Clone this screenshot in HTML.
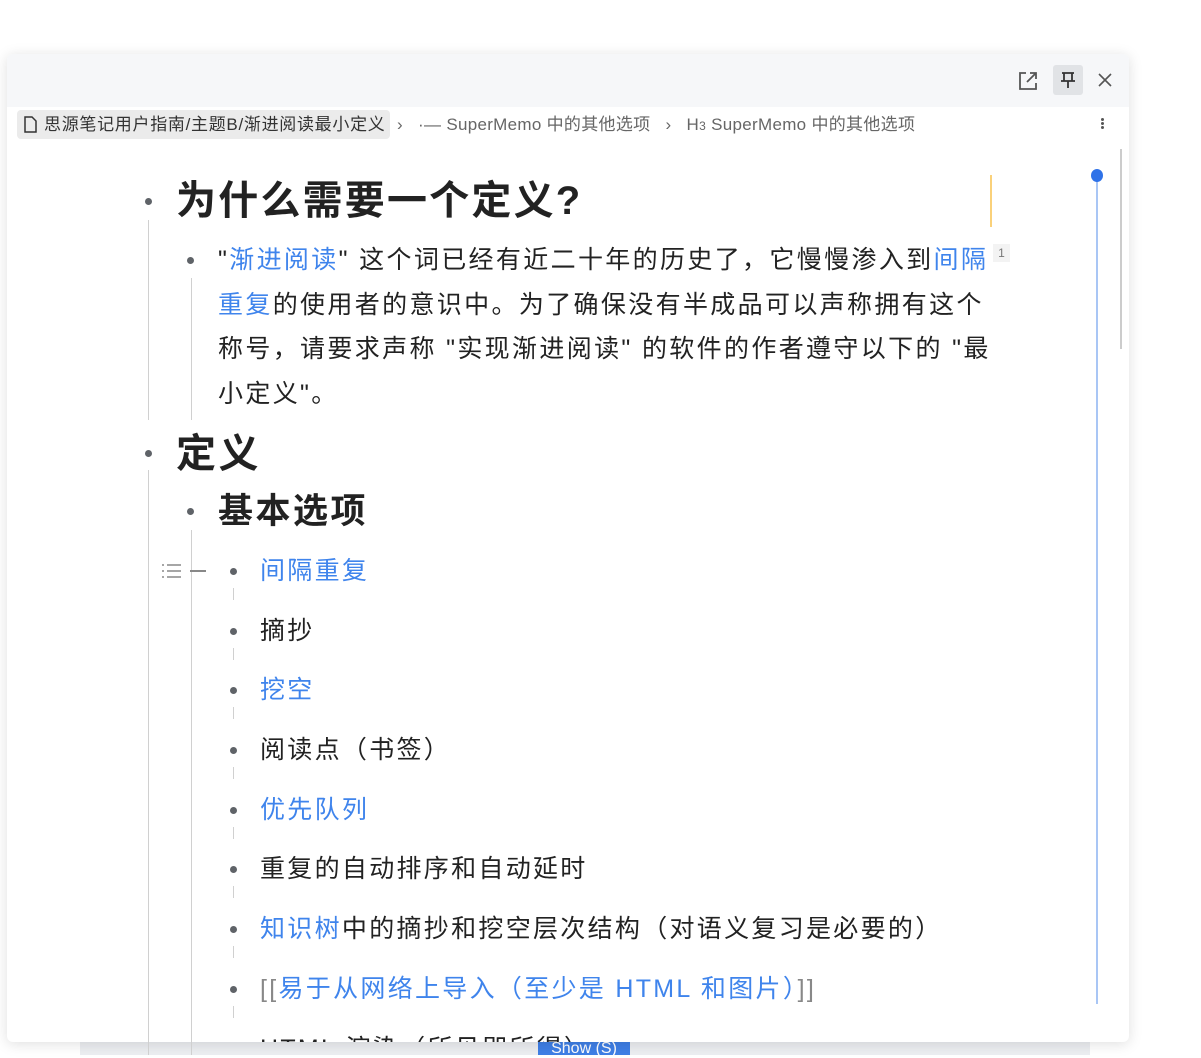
<!DOCTYPE html>
<html><head><meta charset="utf-8"><style>
*{margin:0;padding:0;box-sizing:border-box}
body{width:1201px;height:1055px;overflow:hidden;background:#fff;position:relative;font-family:"Liberation Sans","Noto Sans CJK SC",sans-serif;color:#222}
.a{position:absolute;white-space:nowrap}
.panel{position:absolute;left:7px;top:54px;width:1122px;height:988px;background:#fff;border-radius:6px;box-shadow:0 2px 14px rgba(0,0,0,.13);overflow:hidden}
.hdr{position:absolute;left:0;top:0;width:100%;height:53px;background:#f6f7f9}
.dot{position:absolute;width:7px;height:7px;border-radius:50%;background:#5f6368}
.vl{position:absolute;width:1px;background:#d0d0d0}
.blue{color:#3f84ec}
.t{font-size:25px;line-height:45px;letter-spacing:2.3px}
.p{letter-spacing:2.35px}
</style></head><body>
<div class="a" style="left:80px;top:1040px;width:1010px;height:15px;background:#eceef1"></div>
<div class="a" style="left:538px;top:1040px;width:92px;height:15px;background:#3f7fe6;color:#fff;font-size:16px;line-height:18px;text-align:center">Show (S)</div>
<div class="panel">
<div class="hdr"></div>
<svg class="a" style="left:1010px;top:16px" width="22" height="22" viewBox="0 0 22 22" fill="none" stroke="#555" stroke-width="1.8"><path d="M9 3H3v16h16v-6"/><path d="M13 3h6v6M19 3l-9 9"/></svg>
<div class="a" style="left:1046px;top:11px;width:30px;height:30px;background:#e1e3e6;border-radius:3px"></div>
<svg class="a" style="left:1051px;top:16px" width="20" height="20" viewBox="0 0 20 20" fill="none" stroke="#333" stroke-width="1.8"><path d="M4 3h12M6 3v8h8V3M3 11h14M10 11v7"/></svg>
<svg class="a" style="left:1091px;top:19px" width="14" height="14" viewBox="0 0 14 14" stroke="#555" stroke-width="1.6"><path d="M1 1l12 12M13 1L1 13"/></svg>
<div class="a" style="left:10px;top:56px;width:373px;height:29px;background:#ebebeb;border-radius:4px"></div>
<svg class="a" style="left:16px;top:62px" width="15" height="17" viewBox="0 0 15 17" fill="none" stroke="#333" stroke-width="1.5"><path d="M2 1h7l4 4v11H2z"/></svg>
<div class="a" style="left:37px;top:58px;font-size:17px;line-height:26px;color:#333;letter-spacing:0.7px">思源笔记用户指南/主题B/渐进阅读最小定义</div>
<div class="a" style="left:390px;top:58px;font-size:17px;line-height:26px;color:#666;letter-spacing:0.3px">›&nbsp;&nbsp;&nbsp;·— SuperMemo 中的其他选项&nbsp;&nbsp;&nbsp;›&nbsp;&nbsp;&nbsp;H<span style="font-size:12px">3</span> SuperMemo 中的其他选项</div>
<div class="a" style="left:1094px;top:64px;width:3px;height:3px;background:#555;border-radius:50%;box-shadow:0 4px 0 #555,0 8px 0 #555"></div>
<div class="a" style="left:1113px;top:95px;width:2px;height:200px;background:#ccc"></div>
<div class="a" style="left:1089px;top:120px;width:2px;height:830px;background:#a9c6f5"></div>
<div class="a" style="left:1084px;top:115px;width:12px;height:13px;border-radius:50%;background:#2f72e8"></div>
<div class="a" style="left:983px;top:121px;width:2px;height:52px;background:#fad17a"></div>
</div>
<div class="dot" style="left:145px;top:198px"></div>
<div class="a" style="left:176px;top:174px;font-size:40px;font-weight:bold;line-height:54px;letter-spacing:2.2px">为什么需要一个定义?</div>
<div class="vl" style="left:148px;top:220px;height:200px"></div>
<div class="dot" style="left:187px;top:257px"></div>
<div class="vl" style="left:191px;top:278px;height:142px"></div>
<div class="a t p" style="left:218px;top:238px">"<span class="blue">渐进阅读</span>" 这个词已经有近二十年的历史了，它慢慢渗入到<span class="blue">间隔</span></div>
<div class="a" style="left:993px;top:244px;width:17px;height:18px;background:#f3f3f3;font-size:12px;color:#777;text-align:center;line-height:18px">1</div>
<div class="a t p" style="left:218px;top:283px"><span class="blue">重复</span>的使用者的意识中。为了确保没有半成品可以声称拥有这个</div>
<div class="a t p" style="left:218px;top:327px">称号，请要求声称 "实现渐进阅读" 的软件的作者遵守以下的 "最</div>
<div class="a t p" style="left:218px;top:372px">小定义"。</div>
<div class="dot" style="left:145px;top:450px"></div>
<div class="a" style="left:176px;top:427px;font-size:40px;font-weight:bold;line-height:54px;letter-spacing:2.5px">定义</div>
<div class="vl" style="left:148px;top:470px;height:585px"></div>
<div class="dot" style="left:187px;top:508px"></div>
<div class="a" style="left:218px;top:489px;font-size:35px;font-weight:bold;line-height:46px;letter-spacing:2.5px">基本选项</div>
<div class="vl" style="left:191px;top:530px;height:525px"></div>
<svg class="a" style="left:162px;top:563px" width="20" height="16" viewBox="0 0 20 16" stroke="#888" stroke-width="1.5"><path d="M0 2h2M5 2h14M0 8h2M5 8h14M0 14h2M5 14h14"/></svg>
<div class="a" style="left:190px;top:570px;width:16px;height:1.5px;background:#888"></div>
<div class="a t" style="left:260px;top:549px" ><span class="blue">间隔重复</span></div>
<div class="a t" style="left:260px;top:609px">摘抄</div>
<div class="a t" style="left:260px;top:668px"><span class="blue">挖空</span></div>
<div class="a t" style="left:260px;top:728px">阅读点（书签）</div>
<div class="a t" style="left:260px;top:788px"><span class="blue">优先队列</span></div>
<div class="a t" style="left:260px;top:847px">重复的自动排序和自动延时</div>
<div class="a t" style="left:260px;top:907px"><span class="blue">知识树</span>中的摘抄和挖空层次结构（对语义复习是必要的）</div>
<div class="a t" style="left:260px;top:967px;color:#888">[[<span class="blue">易于从网络上导入（至少是 HTML 和图片）</span>]]</div>
<div class="a t" style="left:260px;top:1027px;height:15px;overflow:hidden">HTML 渲染（所见即所得）</div>
<div class="dot" style="left:230px;top:568px"></div><div class="vl" style="left:233px;top:588px;height:12px"></div>
<div class="dot" style="left:230px;top:628px"></div><div class="vl" style="left:233px;top:648px;height:12px"></div>
<div class="dot" style="left:230px;top:687px"></div><div class="vl" style="left:233px;top:707px;height:12px"></div>
<div class="dot" style="left:230px;top:747px"></div><div class="vl" style="left:233px;top:767px;height:12px"></div>
<div class="dot" style="left:230px;top:807px"></div><div class="vl" style="left:233px;top:827px;height:12px"></div>
<div class="dot" style="left:230px;top:866px"></div><div class="vl" style="left:233px;top:886px;height:12px"></div>
<div class="dot" style="left:230px;top:926px"></div><div class="vl" style="left:233px;top:946px;height:12px"></div>
<div class="dot" style="left:230px;top:986px"></div><div class="vl" style="left:233px;top:1006px;height:12px"></div>
</body></html>
